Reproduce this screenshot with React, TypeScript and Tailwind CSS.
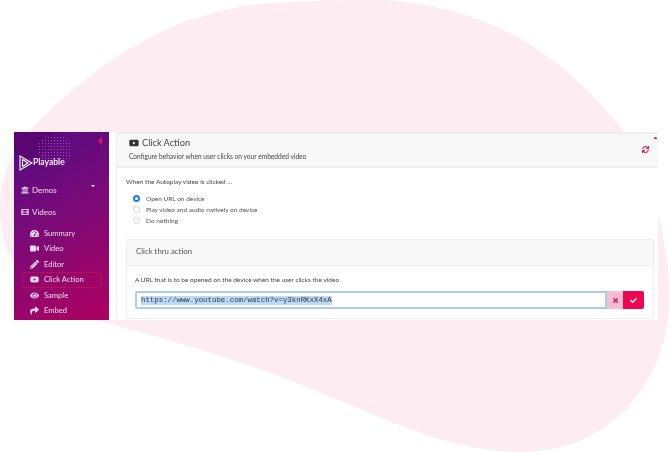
import { FaUniversity, FaFilm, FaTachometerAlt, FaVideo, FaPencilAlt, FaYoutube, FaEye, FaShare, FaSync, FaTimes, FaCheck } from "react-icons/fa";

const sub = [
  { label: "Summary", Icon: FaTachometerAlt, active: false },
  { label: "Video", Icon: FaVideo, active: false },
  { label: "Editor", Icon: FaPencilAlt, active: false },
  { label: "Click Action", Icon: FaYoutube, active: true },
  { label: "Sample", Icon: FaEye, active: false },
  { label: "Embed", Icon: FaShare, active: false },
];

const dots = "radial-gradient(#e6e6e6 0.5px, transparent 0.6px)";

function Radio({ label, on }: { label: string; on?: boolean }) {
  return (
    <div className="flex items-center h-[11px]">
      <span className={`w-[7px] h-[7px] rounded-full shrink-0 ${on ? "border-[2px] border-[#1a7cf0] bg-white" : "border border-[#d4d4d4] bg-white"}`} />
      <span className="ml-[6px] text-[6.5px] text-[#555]">{label}</span>
    </div>
  );
}

export default function App() {
  return (
    <div className="relative w-[671px] h-[452px] overflow-hidden bg-white pt-[132px] pl-[14px] font-['Lato',sans-serif]">
      <svg className="absolute left-0 top-0" width="671" height="452" viewBox="0 0 671 452">
        <path
          fill="#fdecf2"
          d="M369 0 C420 0 465 12 503 30 C550 52 590 88 624 132 C650 170 675 255 668 318 C660 385 610 452 520 452 C455 451 400 426 336 399 C260 365 170 340 97 320 C70 312 30 285 14 263 C5 250 0 230 0 205 C0 180 10 155 28 132 C60 100 95 68 133 47 C165 28 205 11 253 5 C280 2 320 0 369 0 Z"
        />
      </svg>
      <div className="relative flex w-[644px] h-[188px] bg-white overflow-hidden blur-[0.3px]">
        <aside className="relative w-[95px] shrink-0 overflow-hidden text-white bg-[linear-gradient(150deg,#520c84_0%,#7a0a78_45%,#b00060_100%)]">
          <div className="absolute -left-[10px] -top-[24px] w-[50px] h-[50px] rounded-full bg-[#5a0672]" />
          <div className="absolute left-[24px] top-[4px] w-[34px] h-[26px] rounded-full opacity-60 bg-[radial-gradient(#c58ad0_0.6px,transparent_0.7px)] bg-[length:3px_3px]" />
          <div className="absolute right-[7px] top-[5px] w-0 h-0 border-y-[4px] border-y-transparent border-r-[4px] border-r-[#f0104f]" />
          <div className="absolute right-[14px] top-[53px] w-0 h-0 border-x-[2px] border-x-transparent border-t-[2px] border-t-white" />
          <div className="relative flex items-center pl-[5px] pt-[20px] h-[41px]">
            <svg width="14" height="16" viewBox="0 0 14 16" fill="none" stroke="white" strokeWidth="1.1">
              <path d="M1 1 L13 8 L1 15 Z" />
              <path d="M3.5 4.5 L9 8 L3.5 11.5 Z" />
            </svg>
            <span className="text-[8.6px] font-semibold">Playable</span>
          </div>
          <nav className="relative mt-[6px] pl-[6px]">
            <div className="flex items-center h-[22px] text-[8px] text-[#f1dcef]">
              <FaUniversity className="w-[8px] h-[8px] ml-[1px]" />
              <span className="ml-[3px]">Demos</span>
            </div>
            <div className="flex items-center h-[22px] text-[8px] text-[#f1dcef]">
              <FaFilm className="w-[8px] h-[8px] ml-[1px]" />
              <span className="ml-[3px]">Videos</span>
            </div>
            <div className="mt-[2.5px] -ml-[6px] flex flex-col">
              {sub.map(({ label, Icon, active }) => (
                <div
                  key={label}
                  className={`flex items-center ml-[8px] w-[80px] h-[15.5px] pl-[7px] text-[7.6px] text-[#f1dcef] border ${active ? "border-[#b5104f] rounded-[1px]" : "border-transparent"}`}
                >
                  <Icon className="w-[9px] h-[9px] shrink-0" />
                  <span className="ml-[5px]">{label}</span>
                </div>
              ))}
            </div>
          </nav>
        </aside>
        <main className="ml-[7px] flex-1 min-w-0 border-l border-[#efefef]">
          <header
            className="relative h-[36px] border-t-[2px] border-b-[2px] border-[#eeeeee] bg-[#f8f8f8] pl-[12px] pt-[3px] bg-[length:4px_4px]"
            style={{ backgroundImage: dots }}
          >
            <div className="flex items-center h-[12px] text-[#444]">
              <FaYoutube className="w-[10px] h-[10px] text-[#333]" />
              <span className="ml-[3px] text-[9.2px]">Click Action</span>
            </div>
            <div className="mt-[3px] text-[6.6px] text-[#444]">Configure behavior when user clicks on your embedded video</div>
            <FaSync className="absolute right-[9px] top-[12px] w-[7px] h-[7px] text-[#ee0b50]" />
            <div className="absolute right-[1px] top-[3px] w-[3px] h-[2px] rounded-t-full bg-[#ee0b50]" />
          </header>
          <div className="pl-[9px] pt-[9px] pr-[4px]">
            <div className="text-[6.5px] text-[#444] leading-[9px]">When the Autoplay video is clicked ...</div>
            <div className="mt-[7px] pl-[7px]">
              <Radio label="Open URL on device" on />
              <Radio label="Play video and audio natively on device" />
              <Radio label="Do nothing" />
            </div>
            <section className="mt-[13px] w-[528px] border border-[#eeeeee] rounded-[2px]">
              <div
                className="h-[26px] flex items-center pl-[9px] pb-[2px] bg-[#f8f8f8] border-b border-[#eeeeee] text-[7.8px] text-[#555] bg-[length:4px_4px]"
                style={{ backgroundImage: dots }}
              >
                Click thru action
              </div>
              <div className="pl-[8px] pt-[10px] pb-[9px]">
                <div className="text-[6.5px] text-[#444] leading-[8px]">A URL that is to be opened on the device when the user clicks the video</div>
                <div className="mt-[7px] flex h-[18px]">
                  <div className="w-[472px] border-2 border-[#a9cdf2] rounded-l-[2px] bg-white flex items-center pl-[4px]">
                    <span className="font-['Liberation_Mono',monospace] text-[7.4px] text-[#333] bg-[#bcd9f8] leading-[9px]">https://www.youtube.com/watch?v=y3knRKxX4xA</span>
                  </div>
                  <div className="w-[16px] bg-[#f9bdd2] flex items-center justify-center">
                    <FaTimes className="w-[7px] h-[7px] text-[#e8084c]" />
                  </div>
                  <div className="w-[21px] bg-[#ee0650] rounded-r-[2px] flex items-center justify-center">
                    <FaCheck className="w-[7px] h-[7px] text-white" />
                  </div>
                </div>
              </div>
            </section>
          </div>
        </main>
      </div>
    </div>
  );
}
